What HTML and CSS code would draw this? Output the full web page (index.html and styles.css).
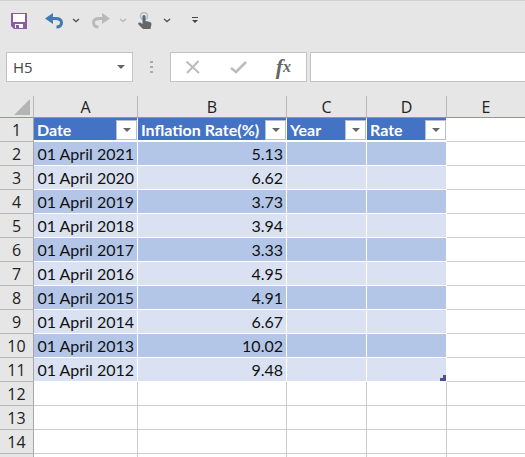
FILE: index.html
```html
<!DOCTYPE html>
<html lang="en">
<head>
  <meta charset="UTF-8">
  <meta name="viewport" content="width=device-width, initial-scale=1.0">
  <title>Inflation Rate</title>
  <link rel="stylesheet" href="styles.css">
</head>
<body>
  <div class="quick-access">
    <button class="tool save" aria-label="Save">
      <svg width="16" height="16" viewBox="0 0 16 16"><path d="M0 0h16v16H3l-3-3z" fill="#8a5ca6"/><path d="M2 1h12v8H2z" fill="#fff"/><path d="M4 11h8v4H4z" fill="#fff"/><path d="M5 12h3v3H5z" fill="#8a5ca6"/></svg>
    </button>
    <button class="tool undo" aria-label="Undo">
      <svg width="18" height="16" viewBox="0 0 18 16"><path d="M8 0v3.500l-2.500 2L8 7.500V11L0 5.500z" fill="#3f7ab3"/><path d="M4 5.500h6.500c4 0 6 2 6 4.300s-1.800 4.200-5 4.200" fill="none" stroke="#3f7ab3" stroke-width="3"/></svg>
    </button>
    <button class="more" aria-label="Undo list">
      <svg width="8" height="5" viewBox="0 0 8 5"><path d="M1 1l3 2.500L7 1" fill="none" stroke="#555" stroke-width="1.400"/></svg>
    </button>
    <button class="tool redo" aria-label="Redo">
      <svg width="18" height="16" viewBox="0 0 18 16"><path d="M10 0v3.500l2.500 2-2.500 2V11l8-5.500z" fill="#b9b9b9"/><path d="M14 5.500H7.500c-4 0-6 2-6 4.300S3.300 14 6.500 14" fill="none" stroke="#b9b9b9" stroke-width="3"/></svg>
    </button>
    <button class="more" aria-label="Redo list">
      <svg width="8" height="5" viewBox="0 0 8 5"><path d="M1 1l3 2.500L7 1" fill="none" stroke="#b9b9b9" stroke-width="1.400"/></svg>
    </button>
    <button class="tool touch" aria-label="Touch mode">
      <svg width="14" height="18" viewBox="0 0 14 18"><circle cx="6" cy="4" r="3.500" fill="none" stroke="#a9bccb" stroke-width="1.500"/><path d="M4.500 4q1.500-2 3 0v5l4.500 1q1.500.5 1.500 2l-1 5H5l-5-5q0-2 2-1.500l2.500 1.500z" fill="#666"/></svg>
    </button>
    <button class="more" aria-label="Touch mode list">
      <svg width="8" height="5" viewBox="0 0 8 5"><path d="M1 1l3 2.500L7 1" fill="none" stroke="#555" stroke-width="1.400"/></svg>
    </button>
    <button class="more customize" aria-label="Customize toolbar">
      <svg width="6" height="7" viewBox="0 0 6 7"><path d="M0 0h6v1H0zM0 3h6L3 6z" fill="#444"/></svg>
    </button>
  </div>

  <div class="formula-bar">
    <div class="name-box">
      <input type="text" value="H5" aria-label="Name box">
      <button class="arrow" aria-label="Names"></button>
    </div>
    <div class="grip"><i></i><i></i><i></i></div>
    <div class="entry-buttons">
      <button aria-label="Cancel">
        <svg width="16" height="14" viewBox="0 0 16 14"><path d="M1.500 1.500L14 13M13.500 1L2 13" fill="none" stroke="#bcbcbc" stroke-width="2"/></svg>
      </button>
      <button aria-label="Enter">
        <svg width="17" height="13" viewBox="0 0 17 13"><path d="M1 7l5 4L16 1" fill="none" stroke="#bcbcbc" stroke-width="2.600"/></svg>
      </button>
      <button class="fx" aria-label="Insert function">f<small>x</small></button>
    </div>
    <input class="formula" type="text" aria-label="Formula">
  </div>

  <table class="sheet">
    <colgroup>
      <col class="col-num"><col class="col-a"><col class="col-b"><col class="col-c"><col class="col-d"><col>
    </colgroup>
    <thead>
      <tr><th class="corner"><svg width="16" height="16" viewBox="0 0 16 16"><path d="M16 0v16H0z" fill="#b4b4b4"/></svg></th><th>A</th><th>B</th><th>C</th><th>D</th><th>E</th></tr>
    </thead>
    <tbody>
      <tr class="titles">
        <th>1</th>
        <td><div class="title"><span>Date</span><button class="filter" aria-label="Filter Date"></button></div></td>
        <td><div class="title"><span>Inflation Rate(%)</span><button class="filter" aria-label="Filter Inflation Rate"></button></div></td>
        <td><div class="title"><span>Year</span><button class="filter" aria-label="Filter Year"></button></div></td>
        <td><div class="title"><span>Rate</span><button class="filter" aria-label="Filter Rate"></button></div></td>
        <td></td>
      </tr>
      <tr class="dark"><th>2</th><td>01 April 2021</td><td>5.13</td><td></td><td></td><td></td></tr>
      <tr class="light"><th>3</th><td>01 April 2020</td><td>6.62</td><td></td><td></td><td></td></tr>
      <tr class="dark"><th>4</th><td>01 April 2019</td><td>3.73</td><td></td><td></td><td></td></tr>
      <tr class="light"><th>5</th><td>01 April 2018</td><td>3.94</td><td></td><td></td><td></td></tr>
      <tr class="dark"><th>6</th><td>01 April 2017</td><td>3.33</td><td></td><td></td><td></td></tr>
      <tr class="light"><th>7</th><td>01 April 2016</td><td>4.95</td><td></td><td></td><td></td></tr>
      <tr class="dark"><th>8</th><td>01 April 2015</td><td>4.91</td><td></td><td></td><td></td></tr>
      <tr class="light"><th>9</th><td>01 April 2014</td><td>6.67</td><td></td><td></td><td></td></tr>
      <tr class="dark"><th>10</th><td>01 April 2013</td><td>10.02</td><td></td><td></td><td></td></tr>
      <tr class="light"><th>11</th><td>01 April 2012</td><td>9.48</td><td></td><td class="table-end"></td><td></td></tr>
      <tr><th>12</th><td></td><td></td><td></td><td></td><td></td></tr>
      <tr><th>13</th><td></td><td></td><td></td><td></td><td></td></tr>
      <tr><th>14</th><td></td><td></td><td></td><td></td><td></td></tr>
      <tr><th></th><td></td><td></td><td></td><td></td><td></td></tr>
    </tbody>
  </table>
</body>
</html>
```
FILE: styles.css
```css
* {
  box-sizing: border-box;
}
body {
  margin: 0;
  height: 100vh;
  overflow: hidden;
  background-color: #e6e6e6;
  border-top: 1px solid #d2d2d2;
  font-family: "Open Sans", sans-serif;
  color: #222;
}
button {
  display: flex;
  align-items: center;
  justify-content: center;
  padding: 0;
  border: 0;
  background: none;
}
input {
  min-width: 0;
  border: 0;
  outline: 0;
  padding: 0;
  background: none;
  font-family: inherit;
}

/* quick access toolbar */
.quick-access {
  display: flex;
  align-items: center;
  height: 39px;
  padding-left: 10px;
}
.tool {
  width: 18px;
}
.undo {
  margin-left: 17px;
}
.redo {
  margin-left: 12px;
}
.touch {
  margin-left: 9px;
}
.more {
  width: 8px;
  margin-left: 9px;
}
.customize {
  margin-left: 20px;
}

/* name box and formula bar */
.formula-bar {
  display: flex;
  height: 30px;
  margin: 12px 0 14px 6px;
}
.name-box {
  display: flex;
  width: 127px;
  padding: 0 7px 0 6px;
  border: 1px solid #c3c3c3;
  background-color: #fff;
}
.name-box input {
  flex: 1;
  font-size: 15px;
  color: #444;
}
.arrow::before,
.filter::before {
  content: "";
  border: 4px solid transparent;
  border-top-color: #666;
  border-bottom: 0;
}
.grip {
  display: flex;
  flex-direction: column;
  align-items: center;
  justify-content: center;
  gap: 3px;
  width: 37px;
}
.grip i {
  width: 3px;
  height: 2px;
  background-color: #aaa;
}
.entry-buttons {
  display: flex;
  justify-content: space-between;
  width: 137px;
  padding: 0 15px 0 14px;
  border: 1px solid #c3c3c3;
  background-color: #fff;
}
.fx {
  font: italic bold 22px "Liberation Serif", serif;
  color: #666;
}
.fx small {
  font-size: 16px;
}
.formula {
  flex: 1;
  margin-left: 3px;
  border: 1px solid #c3c3c3;
  border-right: 0;
  background-color: #fff;
}

/* sheet */
.sheet {
  width: 100%;
  table-layout: fixed;
  border-collapse: separate;
  border-spacing: 0;
  background-color: #fff;
}
.col-num {
  width: 34px;
}
.col-a {
  width: 104px;
}
.col-b {
  width: 149px;
}
.col-c,
.col-d {
  width: 80px;
}
.sheet th {
  height: 24px;
  padding: 0;
  border-right: 1px solid #a6a6a6;
  border-bottom: 1px solid #b8b8b8;
  background-color: #e6e6e6;
  font-size: 16px;
  line-height: 20px;
  font-weight: normal;
}
.sheet thead th {
  height: 22px;
  border-right-color: #b8b8b8;
  border-bottom-color: #929b88;
}
.sheet thead th:last-child {
  border-right: 0;
}
.sheet .corner {
  padding-right: 3px;
  text-align: right;
}
.corner svg {
  display: block;
  margin-left: auto;
}
.sheet td {
  height: 24px;
  padding: 0 3px;
  border-right: 1px solid #ccc;
  border-bottom: 1px solid #ccc;
  font-family: Lato, sans-serif;
  font-size: 16px;
  line-height: 20px;
  text-align: right;
  white-space: nowrap;
  color: #111;
}
.sheet td:last-child {
  border-right: 0;
}
.titles td:not(:last-child) {
  padding: 0;
  border-color: #fff;
  background-color: #4472c4;
  box-shadow: inset 0 -1px #fff;
}
.title {
  display: flex;
  align-items: center;
  height: 22px;
  padding-left: 3px;
  font-weight: bold;
  color: #fff;
}
.title span {
  flex: 1;
  min-width: 0;
  overflow: hidden;
  text-align: left;
}
.filter {
  flex: none;
  width: 21px;
  height: 20px;
  border: 1px solid #b5bfd0;
  background-color: #fff;
}
.dark td:not(:last-child) {
  border-color: #fff;
  background-color: #b4c6e7;
}
.light td:not(:last-child) {
  border-color: #fff;
  background-color: #d9e1f2;
}
/* resize handle of the table */
.sheet .table-end {
  padding: 0;
  background-image: linear-gradient(#4b4f96, #4b4f96), linear-gradient(#4b4f96, #4b4f96);
  background-position: right bottom, right bottom;
  background-size: 6px 3px, 3px 6px;
  background-repeat: no-repeat;
}
```
